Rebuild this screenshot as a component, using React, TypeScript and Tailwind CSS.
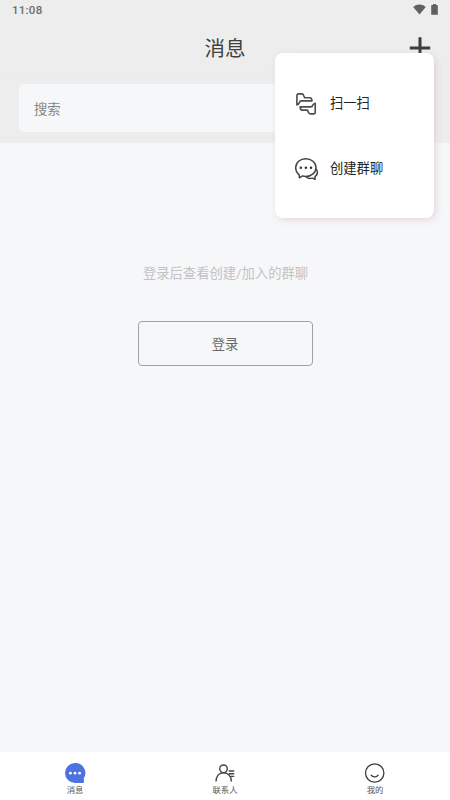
import type { ReactNode } from "react";

export default function App() {
  return (
    <div className="relative flex h-[800px] w-[450px] flex-col overflow-hidden bg-[#f6f7f9] font-['Roboto','Noto_Sans_CJK_SC',sans-serif]">
      <header className="flex h-[143px] flex-col bg-[#ededed]">
        <StatusBar />
        <div className="relative flex h-[53px] items-center justify-center border-b border-[#ebebeb] pt-[6px]">
          <h1 className="text-[20.5px] leading-none text-[#404040]">消息</h1>
          <PlusIcon />
        </div>
        <div className="mx-[19px] mt-[11px] flex h-12 items-center rounded-[5px] bg-[#f6f7f9] px-[15px] pt-[3px] text-[13.3px] text-[#858585]">
          搜索
        </div>
      </header>

      <main className="flex flex-1 flex-col items-center pt-[121px]">
        <p className="pl-px text-[13.3px] leading-5 text-[#c2c2c2]">登录后查看创建/加入的群聊</p>
        <button className="mt-[37px] h-[45px] w-[175px] rounded-[4px] border border-[#a0a2a5] pt-[2px] text-[13.3px] text-[#6a6a6a]">
          登录
        </button>
      </main>

      <nav className="grid h-12 grid-cols-3 bg-white">
        <Tab label="消息" icon={<MessageIcon />} />
        <Tab label="联系人" icon={<ContactIcon />} />
        <Tab label="我的" icon={<ProfileIcon />} />
      </nav>

      <div className="absolute top-[53px] left-[275px] flex h-[165px] w-[158.5px] flex-col rounded-[8px] bg-white pt-[18px] shadow-[2px_2px_6px_rgba(210,180,185,0.45)]">
        <MenuItem label="扫一扫" icon={<ScanIcon />} />
        <MenuItem label="创建群聊" icon={<GroupChatIcon />} />
      </div>
    </div>
  );
}

function StatusBar() {
  return (
    <div className="flex h-5 items-center justify-between pr-3 pl-3">
      <span className="pt-px text-[11.5px] leading-none font-medium tracking-[0.25px] text-[#6c6c6c]">11:08</span>
      <div className="flex items-center gap-[5px] pb-px">
        <svg width="13" height="11" viewBox="0 0 13 11" fill="#606060">
          <path d="M0.2 3C3.8-0.3 9.2-0.3 12.8 3L6.5 10.6Z" />
        </svg>
        <svg width="7" height="11" viewBox="0 0 7 11" fill="#606060">
          <path d="M2 0h3v1h1.2a.6.6 0 0 1 .6.6v8.6a.6.6 0 0 1-.6.6H.8a.6.6 0 0 1-.6-.6V1.6A.6.6 0 0 1 .8 1H2Z" />
        </svg>
      </div>
    </div>
  );
}

function MenuItem({ label, icon }: { label: string; icon: ReactNode }) {
  return (
    <div className="flex h-[65px] items-center gap-3 pl-[19px] text-[13.3px] text-[#222]">
      {icon}
      <span className="pt-px">{label}</span>
    </div>
  );
}

function Tab({ label, icon }: { label: string; icon: ReactNode }) {
  return (
    <div className="flex flex-col items-center pt-[10px] text-[8.4px] leading-[12px] text-[#585858]">
      {icon}
      <span>{label}</span>
    </div>
  );
}

function PlusIcon() {
  return (
    <svg className="absolute top-[17px] left-[409px]" width="22" height="22" viewBox="0 0 22 22" stroke="#3c3c3c" strokeWidth="3">
      <path d="M11 0.2v21.6M0.8 11h20.4" />
    </svg>
  );
}

function ScanIcon() {
  return (
    <svg width="24" height="24" viewBox="0 0 24 24" fill="none" stroke="#4c4c4c" strokeWidth="1.6" strokeLinejoin="round">
      <path d="M2.9 12.9V3.6Q2.9 1.9 4.6 1.9H7.7Q9.2 1.9 9.8 3.7L10.6 5.7H15.8Q17.8 5.7 18 8.9H7.5Q5.8 8.9 5.4 10.5Q4.8 12.4 2.9 12.9Z" />
      <path d="M21.2 11.2V20.2Q21.2 21.9 19.5 21.9H16.4Q14.9 21.9 14.3 20.1L13.5 18.1H8.3Q6.3 18.1 6.1 14.9H16.6Q18.3 14.9 18.7 13.3Q19.3 11.6 21.2 11.2Z" />
    </svg>
  );
}

function GroupChatIcon() {
  return (
    <svg width="24" height="24" viewBox="0 0 24 24" fill="none" stroke="#444" strokeWidth="1.5" strokeLinejoin="round" strokeLinecap="round">
      <path d="M5.2 17.7C3 16 1.7 13.6 1.7 10.8C1.7 5.5 6.2 1.7 11.8 1.7S22 5.5 22 10.5S17.5 19.4 11.8 19.4Q10 19.4 8.5 18.9L5.4 20.8Z" />
      <path d="M22.5 12.7C24.2 15.5 23.3 17.9 21 19.7L21.1 22.3L18.3 21.1C15.8 21.8 13.5 21.2 12.4 20" />
      <g fill="#333" stroke="none">
        <circle cx="6.8" cy="10.7" r="1.25" />
        <circle cx="11.9" cy="10.7" r="1.25" />
        <circle cx="17" cy="10.7" r="1.25" />
      </g>
    </svg>
  );
}

function MessageIcon() {
  return (
    <svg width="22" height="22" viewBox="0 0 22 22">
      <path d="M11 1a10 10 0 1 0 0 20h7.8q1.4 0 1.2-1.2l-.2-3.5A10 10 0 0 0 11 1Z" fill="#4e72e2" />
      <g fill="#fff">
        <circle cx="6.4" cy="11.2" r="1.4" />
        <circle cx="11" cy="11.2" r="1.4" />
        <circle cx="15.6" cy="11.2" r="1.4" />
      </g>
    </svg>
  );
}

function ContactIcon() {
  return (
    <svg width="22" height="22" viewBox="0 0 22 22" fill="none" stroke="#444" strokeWidth="1.4">
      <circle cx="9.5" cy="6.8" r="3.8" />
      <path d="M2 19.5C2 14.3 5 10.7 9.5 10.7S17.4 14.3 17.4 19.5M14.8 9h5.4M14.8 11.7h5.4M16.6 14.4h3.6" />
    </svg>
  );
}

function ProfileIcon() {
  return (
    <svg width="22" height="22" viewBox="0 0 22 22" fill="none" stroke="#3c3c3c" strokeWidth="1.3">
      <circle cx="10.7" cy="11" r="9.2" />
      <path d="M7.3 13.2Q10.7 16.7 14.1 13.2" strokeLinecap="round" />
    </svg>
  );
}
